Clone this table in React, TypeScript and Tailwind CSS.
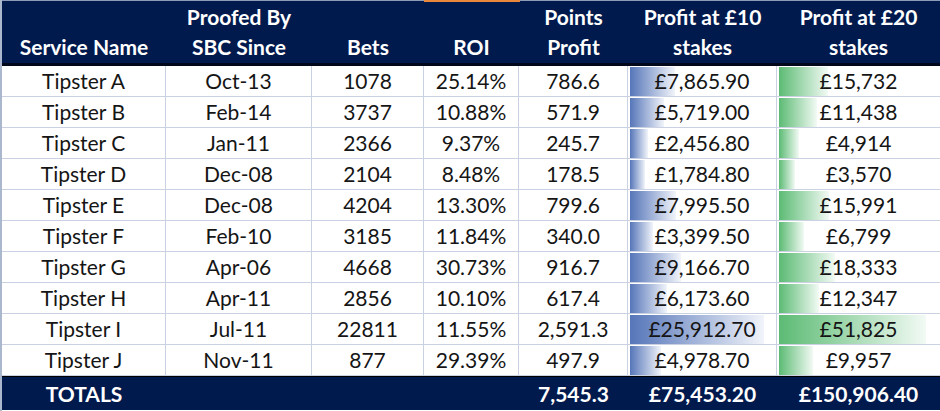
import React from 'react';

type Row = {
  name: string;
  since: string;
  bets: number;
  roi: string;
  points: string;
  p10: number;
  p20: number;
};

const rows: Row[] = [
  { name: 'Tipster A', since: 'Oct-13', bets: 1078, roi: '25.14%', points: '786.6', p10: 7865.9, p20: 15732 },
  { name: 'Tipster B', since: 'Feb-14', bets: 3737, roi: '10.88%', points: '571.9', p10: 5719.0, p20: 11438 },
  { name: 'Tipster C', since: 'Jan-11', bets: 2366, roi: '9.37%', points: '245.7', p10: 2456.8, p20: 4914 },
  { name: 'Tipster D', since: 'Dec-08', bets: 2104, roi: '8.48%', points: '178.5', p10: 1784.8, p20: 3570 },
  { name: 'Tipster E', since: 'Dec-08', bets: 4204, roi: '13.30%', points: '799.6', p10: 7995.5, p20: 15991 },
  { name: 'Tipster F', since: 'Feb-10', bets: 3185, roi: '11.84%', points: '340.0', p10: 3399.5, p20: 6799 },
  { name: 'Tipster G', since: 'Apr-06', bets: 4668, roi: '30.73%', points: '916.7', p10: 9166.7, p20: 18333 },
  { name: 'Tipster H', since: 'Apr-11', bets: 2856, roi: '10.10%', points: '617.4', p10: 6173.6, p20: 12347 },
  { name: 'Tipster I', since: 'Jul-11', bets: 22811, roi: '11.55%', points: '2,591.3', p10: 25912.7, p20: 51825 },
  { name: 'Tipster J', since: 'Nov-11', bets: 877, roi: '29.39%', points: '497.9', p10: 4978.7, p20: 9957 },
];

const gbp = (n: number, dp: number) =>
  '£' + n.toLocaleString('en-GB', { minimumFractionDigits: dp, maximumFractionDigits: dp });

// excel-style bar: 10% min, 90% max of the cell
function barStyle(v: number, min: number, max: number, cellW: number, from: string, to: string) {
  const lo = cellW * 0.1;
  const hi = cellW * 0.9;
  const w = Math.round(lo + (hi - lo) * ((v - min) / (max - min)));
  return {
    backgroundImage: `linear-gradient(to right, ${from}, ${to})`,
    backgroundSize: `${w}px 29px`,
    backgroundPosition: '2px 1px',
    backgroundRepeat: 'no-repeat',
  };
}

const cols = 'grid grid-cols-[164px_146px_112px_95px_109px_149px_163px]';

export default function App() {
  const p10s = rows.map((r) => r.p10);
  const p20s = rows.map((r) => r.p20);
  const min10 = Math.min(...p10s), max10 = Math.max(...p10s);
  const min20 = Math.min(...p20s), max20 = Math.max(...p20s);

  const cell = 'flex items-center justify-center border-r border-b border-[#c9d1e3] h-[31px]';

  return (
    <div className="relative w-[940px] h-[411px] bg-white border-l-2 border-[#aab7cd] font-['Lato','Liberation_Sans',sans-serif] text-[21px] text-[#151515]">
      {/* selection marker */}
      <div className="absolute left-[422px] top-0 w-[96px] h-[2px] bg-[#e8873a]" />

      {/* Header */}
      <div className={`${cols} h-[63px] bg-[#011a4e] text-white font-bold leading-[30px] border-t border-[#8d9bb8]`}>
        <div className="flex flex-col justify-end items-center pb-[1px]">Service Name</div>
        <div className="flex flex-col justify-end items-center pb-[1px]">
          <span>Proofed By</span>
          <span>SBC Since</span>
        </div>
        <div className="flex flex-col justify-end items-center pb-[1px]">Bets</div>
        <div className="flex flex-col justify-end items-center pb-[1px]">ROI</div>
        <div className="flex flex-col justify-end items-center pb-[1px]">
          <span>Points</span>
          <span>Profit</span>
        </div>
        <div className="flex flex-col justify-end items-center pb-[1px]">
          <span>Profit at £10</span>
          <span>stakes</span>
        </div>
        <div className="flex flex-col justify-end items-center pb-[1px]">
          <span>Profit at £20</span>
          <span>stakes</span>
        </div>
      </div>
      <div className="h-[3px] bg-[#02081c]" />

      {/* Rows */}
      {rows.map((r) => (
        <div key={r.name} className={cols}>
          <div className={cell}>{r.name}</div>
          <div className={cell}>{r.since}</div>
          <div className={cell}>{r.bets}</div>
          <div className={cell}>{r.roi}</div>
          <div className={cell}>{r.points}</div>
          <div className={cell} style={barStyle(r.p10, min10, max10, 149, '#5676b9', '#f1f4fa')}>
            {gbp(r.p10, 2)}
          </div>
          <div className={`${cell} border-r-0`} style={barStyle(r.p20, min20, max20, 163, '#5cbb74', '#f2faf4')}>
            {gbp(r.p20, 0)}
          </div>
        </div>
      ))}

      {/* Totals */}
      <div className={`${cols} h-[34px] bg-[#011a4e] text-white font-bold border-t border-black`}>
        <div className="flex items-center justify-center">TOTALS</div>
        <div />
        <div />
        <div />
        <div className="flex items-center justify-center">7,545.3</div>
        <div className="flex items-center justify-center">£75,453.20</div>
        <div className="flex items-center justify-center">£150,906.40</div>
      </div>
    </div>
  );
}
